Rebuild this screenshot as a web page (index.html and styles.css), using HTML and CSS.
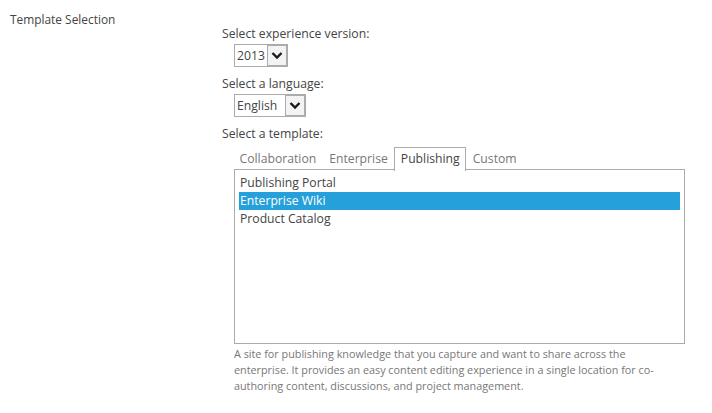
FILE: index.html
```html
<!DOCTYPE html>
<html>
<head>
<meta charset="utf-8">
<link rel="stylesheet" href="styles.css">
</head>
<body>
<div class="section">
  <div class="section-title">Template Selection</div>
  <div class="section-body">
    <div class="field-label first">Select experience version:</div>
    <div class="dropdown dd-version">
      <span class="dd-value">2013</span>
      <span class="dd-btn"><svg width="12" height="9" viewBox="0 0 12 9"><path d="M1.5 2 L6 6.5 L10.5 2" fill="none" stroke="#1a1a1a" stroke-width="2.4"/></svg></span>
    </div>
    <div class="field-label">Select a language:</div>
    <div class="dropdown dd-lang">
      <span class="dd-value">English</span>
      <span class="dd-btn"><svg width="12" height="9" viewBox="0 0 12 9"><path d="M1.5 2 L6 6.5 L10.5 2" fill="none" stroke="#1a1a1a" stroke-width="2.4"/></svg></span>
    </div>
    <div class="field-label">Select a template:</div>
    <div class="tabs">
      <span class="tab">Collaboration</span>
      <span class="tab">Enterprise</span>
      <span class="tab active">Publishing</span>
      <span class="tab">Custom</span>
    </div>
    <div class="listbox">
      <div class="item">Publishing Portal</div>
      <div class="item selected">Enterprise Wiki</div>
      <div class="item">Product Catalog</div>
    </div>
    <div class="desc">A site for publishing knowledge that you capture and want to share across the enterprise. It provides an easy content editing experience in a single location for co-authoring content, discussions, and project management.</div>
  </div>
</div>
</body>
</html>
```
FILE: styles.css
```css
html, body {
  margin: 0;
  padding: 0;
  background: #fff;
}
body {
  font-family: "Open Sans", "Noto Sans", sans-serif;
  font-size: 12.2px;
  color: #444;
}
.section {
  display: flex;
}
.section-title {
  width: 212px;
  padding: 10px 0 0 10px;
  line-height: 18px;
  font-size: 11.9px;
}
.section-body {
  width: 470px;
  padding-top: 25px;
}
.field-label {
  line-height: 18px;
  margin-top: 8px;
}
.field-label.first {
  margin-top: 0;
}
.dropdown {
  display: inline-flex;
  margin: 1px 0 0 12px;
  height: 21px;
  border: 1px solid #ababab;
  box-sizing: content-box;
  align-items: stretch;
}
.dd-value {
  padding: 0 2px;
  line-height: 21px;
  color: #444;
}
.dd-version .dd-value { width: 28px; }
.dd-lang .dd-value { width: 46px; }
.dd-btn {
  width: 18px;
  border: 1px solid #ababab;
  background: #f3f3f3;
  display: flex;
  align-items: center;
  justify-content: center;
}
.tabs {
  display: flex;
  margin: 4px 0 0 11px;
  height: 22px;
  position: relative;
  z-index: 1;
}
.tab {
  line-height: 22px;
  padding: 0 5.5px;
  color: #777;
  border: 1px solid transparent;
  border-bottom: none;
}
.tab.active {
  color: #444;
  background: #fff;
  border-color: #ababab;
  height: 23px;
}
.listbox {
  margin-left: 12px;
  width: 441px;
  height: 169px;
  border: 1px solid #ababab;
  padding: 4px 4px 0 4px;
}
.item {
  line-height: 18px;
  padding-left: 1px;
  color: #444;
}
.item.selected {
  background: #26a0da;
  color: #fff;
}
.desc {
  margin: 2px 0 0 12px;
  width: 446px;
  font-size: 10.8px;
  line-height: 16px;
  color: #777;
}
```
